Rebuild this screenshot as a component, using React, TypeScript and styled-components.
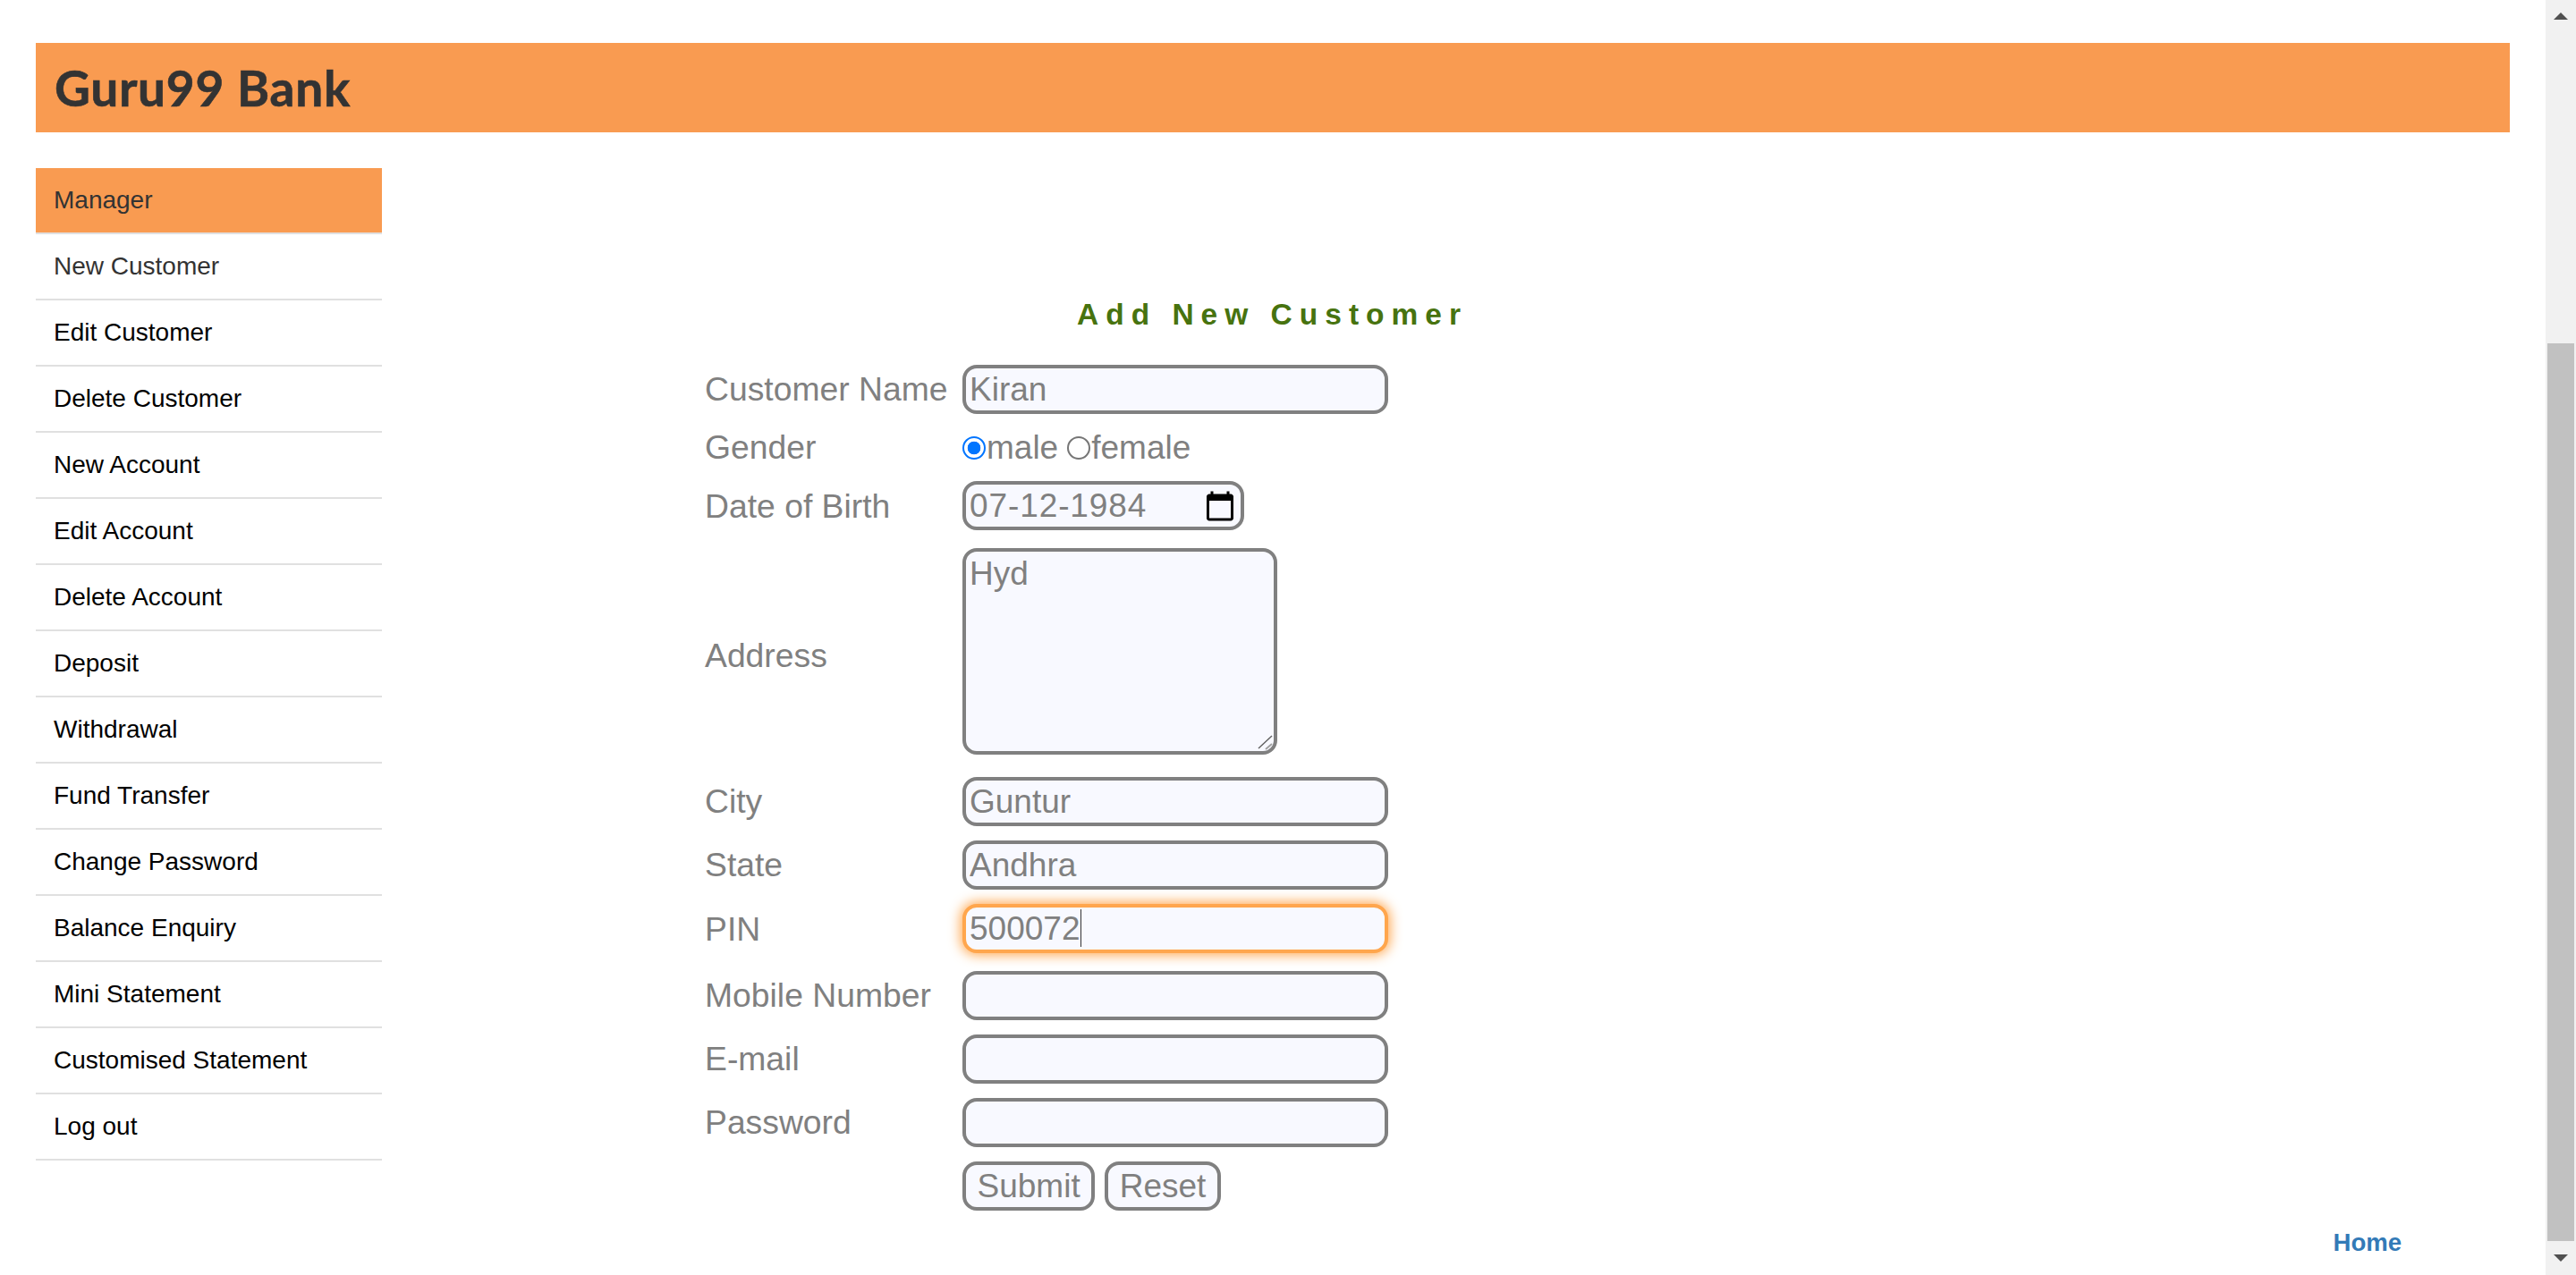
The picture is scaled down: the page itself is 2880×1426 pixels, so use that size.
import styled, { createGlobalStyle } from 'styled-components';

const MENU_ITEMS = [
  'New Customer',
  'Edit Customer',
  'Delete Customer',
  'New Account',
  'Edit Account',
  'Delete Account',
  'Deposit',
  'Withdrawal',
  'Fund Transfer',
  'Change Password',
  'Balance Enquiry',
  'Mini Statement',
  'Customised Statement',
  'Log out',
];

const GlobalStyle = createGlobalStyle`
  html, body {
    margin: 0;
    height: 100%;
    overflow: hidden;
    background: #fff;
  }
  * {
    box-sizing: border-box;
  }
`;

export default function App() {
  return (
    <Page>
      <GlobalStyle />
      <Main>
        <Header>
          <Brand>Guru99 Bank</Brand>
        </Header>
        <Body>
          <Sidebar>
            <MenuItem $active>Manager</MenuItem>
            {MENU_ITEMS.map((item, i) => (
              <MenuItem key={item} $soft={i === 0}>
                {item}
              </MenuItem>
            ))}
          </Sidebar>
          <Content>
            <Title>Add New Customer</Title>
            <Row $gap={0}>
              <Label>Customer Name</Label>
              <TextInput defaultValue="Kiran" />
            </Row>
            <Row>
              <Label>Gender</Label>
              <RadioGroup>
                <Radio type="radio" name="gender" defaultChecked />
                <RadioText>male</RadioText>
                <Radio type="radio" name="gender" $spaced />
                <RadioText>female</RadioText>
              </RadioGroup>
            </Row>
            <Row>
              <Label $nudge={2}>Date of Birth</Label>
              <DateField>
                <DateInput defaultValue="07-12-1984" />
                <CalendarIcon viewBox="0 0 24 24">
                  <path d="M20 3h-1V1h-2v2H7V1H5v2H4c-1.1 0-2 .9-2 2v16c0 1.1.9 2 2 2h16c1.1 0 2-.9 2-2V5c0-1.1-.9-2-2-2zm0 18H4V8h16v13z" />
                </CalendarIcon>
              </DateField>
            </Row>
            <Row $gap={20}>
              <Label $nudge={10}>Address</Label>
              <AddressField>
                <AddressInput defaultValue="Hyd" />
                <ResizeGrip viewBox="0 0 18 18">
                  <line x1="1" y1="15" x2="16" y2="1" stroke="#606060" strokeWidth="1.4" />
                  <line x1="9" y1="16" x2="16" y2="10" stroke="#a0a0a0" strokeWidth="2" />
                </ResizeGrip>
              </AddressField>
            </Row>
            <Row $gap={25}>
              <Label>City</Label>
              <TextInput defaultValue="Guntur" />
            </Row>
            <Row>
              <Label>State</Label>
              <TextInput defaultValue="Andhra" />
            </Row>
            <Row>
              <Label $nudge={2}>PIN</Label>
              <FocusedField>
                <TextInput defaultValue="500072" $focused />
                <Caret />
              </FocusedField>
            </Row>
            <Row $gap={20}>
              <Label>Mobile Number</Label>
              <TextInput />
            </Row>
            <Row>
              <Label>E-mail</Label>
              <TextInput />
            </Row>
            <Row>
              <Label>Password</Label>
              <TextInput type="password" />
            </Row>
            <Row>
              <Label />
              <Buttons>
                <FormButton type="button">Submit</FormButton>
                <FormButton type="button">Reset</FormButton>
              </Buttons>
            </Row>
            <HomeLink href="#">Home</HomeLink>
          </Content>
        </Body>
      </Main>
      <ScrollTrack>
        <Arrow viewBox="0 0 16 8" $top={14}>
          <polygon points="8,0 16,8 0,8" />
        </Arrow>
        <ScrollThumb />
        <Arrow viewBox="0 0 16 8" $top={15}>
          <polygon points="0,0 16,0 8,8" />
        </Arrow>
      </ScrollTrack>
    </Page>
  );
}

const Page = styled.div`
  display: flex;
  height: 1426px;
  font-family: 'Liberation Sans', Arial, sans-serif;
`;

const Main = styled.div`
  flex: 1;
  min-width: 0;
  padding: 48px 40px 0;
`;

const Header = styled.header`
  display: flex;
  align-items: center;
  height: 100px;
  padding-left: 21px;
  background: #f99b51;
`;

const Brand = styled.h1`
  margin: 0;
  font-family: Lato, 'Noto Sans', sans-serif;
  font-size: 55px;
  font-weight: 700;
  letter-spacing: 0.7px;
  color: #333;
  -webkit-text-stroke: 0.6px #333;
`;

const Body = styled.div`
  display: flex;
  margin-top: 40px;
`;

const Sidebar = styled.nav`
  display: flex;
  flex-direction: column;
  flex: none;
  width: 387px;
`;

const MenuItem = styled.div<{ $active?: boolean; $soft?: boolean }>`
  display: flex;
  align-items: center;
  height: 74px;
  padding-left: 20px;
  border-bottom: 2px solid #e0e0e0;
  font-size: 28px;
  color: ${({ $active, $soft }) => ($active || $soft ? '#333' : '#000')};
  background: ${({ $active }) => ($active ? '#f99b51' : 'transparent')};
`;

const Content = styled.main`
  display: flex;
  flex-direction: column;
  flex: 1;
  min-width: 0;
  padding: 144px 0 0 361px;
`;

const Title = styled.h2`
  margin: 0 0 36px;
  padding-left: 416px;
  font-size: 33.5px;
  font-weight: 700;
  line-height: 40px;
  letter-spacing: 8px;
  color: #47730f;
`;

const Row = styled.div<{ $gap?: number }>`
  display: flex;
  align-items: center;
  margin-top: ${({ $gap }) => $gap ?? 16}px;
`;

const Label = styled.div<{ $nudge?: number }>`
  flex: none;
  width: 288px;
  padding-top: ${({ $nudge }) => $nudge ?? 0}px;
  font-size: 37.3px;
  color: #808080;
`;

const TextInput = styled.input<{ $focused?: boolean }>`
  display: block;
  width: 476px;
  height: 55px;
  padding: 0 4px;
  border: 4px solid ${({ $focused }) => ($focused ? '#ffa64d' : '#808080')};
  border-radius: 16px;
  outline: none;
  font-family: inherit;
  font-size: 37px;
  color: #808080;
  background: #f8f9ff;
  box-shadow: ${({ $focused }) => ($focused ? '0 0 14px 2px #ffa64d' : 'none')};
`;

const RadioGroup = styled.div`
  display: flex;
  align-items: center;
  height: 43px;
  font-size: 37px;
  color: #808080;
`;

const Radio = styled.input<{ $spaced?: boolean }>`
  flex: none;
  appearance: none;
  width: 26px;
  height: 26px;
  margin: 0 1px 0 ${({ $spaced }) => ($spaced ? '10px' : '0')};
  border: 2px solid #767676;
  border-radius: 50%;
  background: #fff;

  &:checked {
    border: 2.5px solid #0075ff;
    background: radial-gradient(circle, #0075ff 0 7px, #fff 7.6px);
  }
`;

const RadioText = styled.span``;

const DateField = styled.div`
  display: flex;
  align-items: center;
  width: 315px;
  height: 55px;
  padding: 0 5px 0 4px;
  border: 4px solid #808080;
  border-radius: 16px;
  background: #f8f9ff;
`;

const DateInput = styled.input`
  flex: 1;
  min-width: 0;
  padding: 0;
  border: 0;
  outline: none;
  font-family: inherit;
  font-size: 37px;
  letter-spacing: 0.9px;
  color: #808080;
  background: transparent;
`;

const CalendarIcon = styled.svg`
  flex: none;
  width: 36px;
  height: 36px;
  fill: #000;
`;

const AddressField = styled.div`
  position: relative;
`;

const AddressInput = styled.textarea`
  display: block;
  width: 352px;
  height: 231px;
  padding: 4px;
  border: 4px solid #808080;
  border-radius: 16px;
  outline: none;
  resize: none;
  font-family: inherit;
  font-size: 37px;
  color: #808080;
  background: #f8f9ff;
`;

const ResizeGrip = styled.svg`
  position: absolute;
  right: 4px;
  bottom: 4px;
  width: 18px;
  height: 18px;
`;

const FocusedField = styled.div`
  position: relative;
`;

const Caret = styled.span`
  position: absolute;
  top: 6px;
  left: 132px;
  width: 1px;
  height: 42px;
  background: #333;
`;

const Buttons = styled.div`
  display: flex;
  gap: 11px;
`;

const FormButton = styled.button`
  height: 55px;
  padding: 0 12.5px;
  border: 4px solid #808080;
  border-radius: 16px;
  font-family: inherit;
  font-size: 37px;
  color: #808080;
  background: #f8f9ff;
`;

const HomeLink = styled.a`
  align-self: flex-end;
  margin: 18px 121px 0 0;
  font-size: 27.5px;
  font-weight: 700;
  line-height: 36px;
  color: #337ab7;
  text-decoration: none;
`;

const ScrollTrack = styled.div`
  display: flex;
  flex-direction: column;
  flex: none;
  width: 34px;
  background: #f1f1f1;
`;

const ScrollThumb = styled.div`
  flex: none;
  width: 30px;
  height: 1004px;
  margin: auto 2px 0;
  background: #c1c1c1;
`;

const Arrow = styled.svg<{ $top: number }>`
  flex: none;
  width: 16px;
  height: 8px;
  margin: ${({ $top }) => $top}px 9px;
  fill: #505050;
`;
